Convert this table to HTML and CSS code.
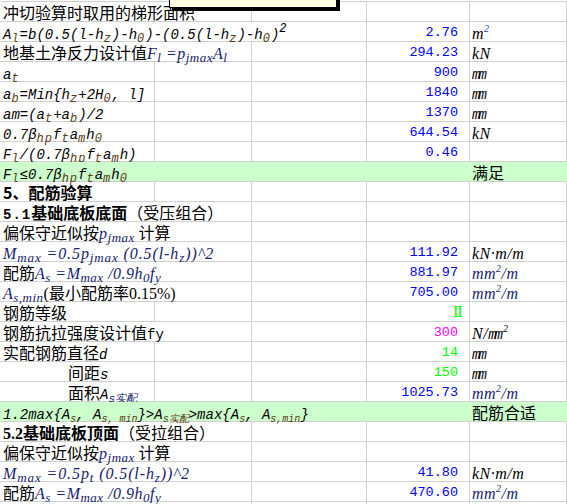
FILE: index.html
```html
<!DOCTYPE html>
<html lang="zh">
<head>
<meta charset="utf-8">
<title>配筋验算</title>
<link rel="stylesheet" href="styles.css">
</head>
<body>
<div class="sheet">
  <div class="note"><span class="note-mark"></span></div>

  <div class="row">
    <div class="c s2">冲切验算时取用的梯形面积</div><div class="c"></div><div class="c"></div><div class="c"></div>
  </div>
  <div class="row">
    <div class="c s3"><span class="mi">A<sub>l</sub>=b(0.5(l-h<sub>z</sub>)-h<sub>0</sub>)-(0.5(l-h<sub>z</sub>)-h<sub>0</sub>)<sup>2</sup></span></div>
    <div class="c num">2.76</div><div class="c unit"><span class="ti">m<sup class="b">2</sup></span></div>
  </div>
  <div class="row">
    <div class="c s2">地基土净反力设计值<span class="ti nv">F<sub>l</sub> =p<sub>jmax</sub>A<sub>l</sub></span></div><div class="c"></div>
    <div class="c num">294.23</div><div class="c unit"><span class="ti">kN</span></div>
  </div>
  <div class="row">
    <div class="c"><span class="mi">a<sub>t</sub></span></div><div class="c"></div><div class="c"></div>
    <div class="c num">900</div><div class="c unit"><span class="mi mm">mm</span></div>
  </div>
  <div class="row">
    <div class="c"><span class="mi">a<sub>b</sub>=Min{h<sub>z</sub>+2H<sub>0</sub>, l]</span></div><div class="c"></div><div class="c"></div>
    <div class="c num">1840</div><div class="c unit"><span class="mi mm">mm</span></div>
  </div>
  <div class="row">
    <div class="c"><span class="mi">am=(a<sub>t</sub>+a<sub>b</sub>)/2</span></div><div class="c"></div><div class="c"></div>
    <div class="c num">1370</div><div class="c unit"><span class="mi mm">mm</span></div>
  </div>
  <div class="row">
    <div class="c"><span class="mi">0.7β<sub>hp</sub>f<sub>t</sub>a<sub>m</sub>h<sub>0</sub></span></div><div class="c"></div><div class="c"></div>
    <div class="c num">644.54</div><div class="c unit"><span class="ti">kN</span></div>
  </div>
  <div class="row">
    <div class="c"><span class="mi">F<sub>l</sub>/(0.7β<sub>hp</sub>f<sub>t</sub>a<sub>m</sub>h)</span></div><div class="c"></div><div class="c"></div>
    <div class="c num">0.46</div><div class="c unit"></div>
  </div>
  <div class="row ok">
    <div class="c"><span class="mi">F<sub>l</sub>≤0.7β<sub>hp</sub>f<sub>t</sub>a<sub>m</sub>h<sub>0</sub></span></div><div class="c"></div><div class="c"></div>
    <div class="c"></div><div class="c unit">满足</div>
  </div>
  <div class="row">
    <div class="c bold">5、配筋验算</div><div class="c"></div><div class="c"></div><div class="c"></div><div class="c"></div>
  </div>
  <div class="row">
    <div class="c s2"><span class="bold"><span class="mb">5.1</span>基础底板底面</span>（受压组合）</div><div class="c"></div><div class="c"></div><div class="c"></div>
  </div>
  <div class="row">
    <div class="c s2">偏保守近似按<span class="ti nv">p<sub>jmax</sub></span> 计算</div><div class="c"></div><div class="c"></div><div class="c"></div>
  </div>
  <div class="row">
    <div class="c s2"><span class="ti nv wide">M<sub>max</sub> =0.5p<sub>jmax</sub> (0.5(l-h<sub>z</sub>))^2</span></div><div class="c"></div>
    <div class="c num">111.92</div><div class="c unit"><span class="ti">kN·m/m</span></div>
  </div>
  <div class="row">
    <div class="c s2">配筋<span class="ti nv">A<sub>s</sub> =M<sub>max</sub> /0.9h<sub>0</sub>f<sub>y</sub></span></div><div class="c"></div>
    <div class="c num">881.97</div><div class="c unit"><span class="ti nv">mm<sup>2</sup>/m</span></div>
  </div>
  <div class="row">
    <div class="c s2"><span class="ti nv">A<sub>s,min</sub></span><span class="tr">(</span>最小配筋率<span class="tr">0.15%)</span></div><div class="c"></div>
    <div class="c num">705.00</div><div class="c unit"><span class="ti nv">mm<sup>2</sup>/m</span></div>
  </div>
  <div class="row">
    <div class="c">钢筋等级</div><div class="c"></div><div class="c"></div>
    <div class="c num grade">Ⅱ</div><div class="c unit"></div>
  </div>
  <div class="row">
    <div class="c s2">钢筋抗拉强度设计值<span class="mono">fy</span></div><div class="c"></div>
    <div class="c num pink">300</div><div class="c unit"><span class="ti">N/</span><span class="mi mm">mm</span><span class="ti"><sup>2</sup></span></div>
  </div>
  <div class="row">
    <div class="c">实配钢筋直径<span class="mi">d</span></div><div class="c"></div><div class="c"></div>
    <div class="c num green">14</div><div class="c unit"><span class="mi mm">mm</span></div>
  </div>
  <div class="row">
    <div class="c indent">间距<span class="mi">s</span></div><div class="c"></div><div class="c"></div>
    <div class="c num green">150</div><div class="c unit"><span class="mi mm">mm</span></div>
  </div>
  <div class="row">
    <div class="c indent">面积<span class="mi">A<sub class="nvs">s实配</sub></span></div><div class="c"></div><div class="c"></div>
    <div class="c num">1025.73</div><div class="c unit"><span class="ti nv">mm<sup>2</sup>/m</span></div>
  </div>
  <div class="row ok">
    <div class="c s3"><span class="mi small">1.2max{A<sub>s</sub>, A<sub>s, min</sub>}&gt;A<sub>s实配</sub>&gt;max{A<sub>s</sub>, A<sub>s,min</sub>}</span></div>
    <div class="c"></div><div class="c unit">配筋合适</div>
  </div>
  <div class="row">
    <div class="c s2"><span class="bold"><span class="tb">5.2</span>基础底板顶面</span>（受拉组合）</div><div class="c"></div><div class="c"></div><div class="c"></div>
  </div>
  <div class="row">
    <div class="c s2">偏保守近似按<span class="ti nv">p<sub>jmax</sub></span> 计算</div><div class="c"></div><div class="c"></div><div class="c"></div>
  </div>
  <div class="row">
    <div class="c s2"><span class="ti nv wide">M<sub>max</sub> =0.5p<sub>t</sub> (0.5(l-h<sub>z</sub>))^2</span></div><div class="c"></div>
    <div class="c num">41.80</div><div class="c unit"><span class="ti">kN·m/m</span></div>
  </div>
  <div class="row">
    <div class="c s2">配筋<span class="ti nv">A<sub>s</sub> =M<sub>max</sub> /0.9h<sub>0</sub>f<sub>y</sub></span></div><div class="c"></div>
    <div class="c num">470.60</div><div class="c unit"><span class="ti nv">mm<sup>2</sup>/m</span></div>
  </div>
  <div class="row">
    <div class="c s2"><span class="ti nv">A<sub>s,min</sub></span><span class="tr">(</span>最小配筋率<span class="tr">0.15%)</span></div><div class="c"></div>
    <div class="c num"></div><div class="c unit"><span class="ti nv">mm<sup>2</sup>/m</span></div>
  </div>
</div>
</body>
</html>
```

FILE: styles.css
```css
html, body {
  margin: 0;
  padding: 0;
  background: #ffffff;
  overflow: hidden;
}

.sheet {
  position: relative;
  margin-top: 1px;
  border-top: 1px solid #d0d0d0;
  font-family: "Noto Sans CJK SC", "Liberation Sans", sans-serif;
  font-size: 16px;
  color: #000000;
}

.row {
  display: grid;
  grid-template-columns: 155px 97px 115px 103px 97px;
  height: 20px;
}

.c {
  box-sizing: border-box;
  height: 20px;
  border-right: 1px solid #d0d0d0;
  border-bottom: 1px solid #d0d0d0;
  padding: 2px 0 0 3px;
  white-space: nowrap;
  line-height: 17px;
  overflow: visible;
}

.s2 { grid-column: span 2; }
.s3 { grid-column: span 3; }

.ok .c {
  background: #ccffcc;
  border-right-color: #ccffcc;
}

.num {
  text-align: right;
  padding: 2px 11px 0 0;
  font-family: "Liberation Mono", "DejaVu Sans Mono", monospace;
  font-size: 13.5px;
  color: #0000ff;
}

.pink { color: #ff00ff; }
.green { color: #00ff00; }

.grade {
  font-family: "DejaVu Serif", "Liberation Serif", serif;
  font-size: 15px;
  color: #00ff00;
  padding-right: 6px;
}

.unit {
  padding-left: 2px;
}

.bold { font-weight: 700; }

.mb {
  font-family: "Liberation Mono", monospace;
  font-size: 14px;
  font-weight: 700;
  letter-spacing: 1px;
}

.tb {
  font-family: "Liberation Serif", serif;
}

.indent { padding-left: 68px; }

.mi, .ti, .tr, .mono {
  line-height: 14px;
}

.mi {
  font-family: "Liberation Mono", monospace;
  font-style: italic;
  font-size: 14px;
  color: #000000;
}

.mi sub,
.mi sup {
  font-size: 12px;
  letter-spacing: 1px;
  color: #5a3a10;
}

.mi sup { color: #000000; }

.mi.small sub {
  font-size: 10px;
  letter-spacing: 0;
}

.mi sub.nvs {
  font-size: 11px;
  letter-spacing: 0;
  color: #16226e;
}

.mm {
  font-size: 14px;
  letter-spacing: -2px;
  padding-right: 2px;
}

.mono {
  font-family: "Liberation Mono", monospace;
  font-size: 14px;
}

.ti {
  font-family: "Liberation Serif", serif;
  font-style: italic;
  font-size: 16px;
  letter-spacing: 0.5px;
}

.ti.wide { letter-spacing: 0.9px; }

.ti sub {
  font-size: 13px;
}

.tr {
  font-family: "Liberation Serif", serif;
  font-size: 16px;
}

.nv { color: #16226e; }

sub, sup {
  font-size: 10px;
  line-height: 0;
}

sub { vertical-align: -3px; }
sup { vertical-align: 7px; }

sup.b { color: #1a3aa8; }

.note {
  position: absolute;
  left: 169px;
  top: -14px;
  width: 166px;
  height: 18px;
  background: #ffffe1;
  border: 1px solid #000000;
  box-shadow: 3px 3px 0 #000000;
  z-index: 2;
}

.note-mark {
  position: absolute;
  right: 1px;
  top: 1px;
  width: 5px;
  height: 1px;
  background: #000000;
}
```
